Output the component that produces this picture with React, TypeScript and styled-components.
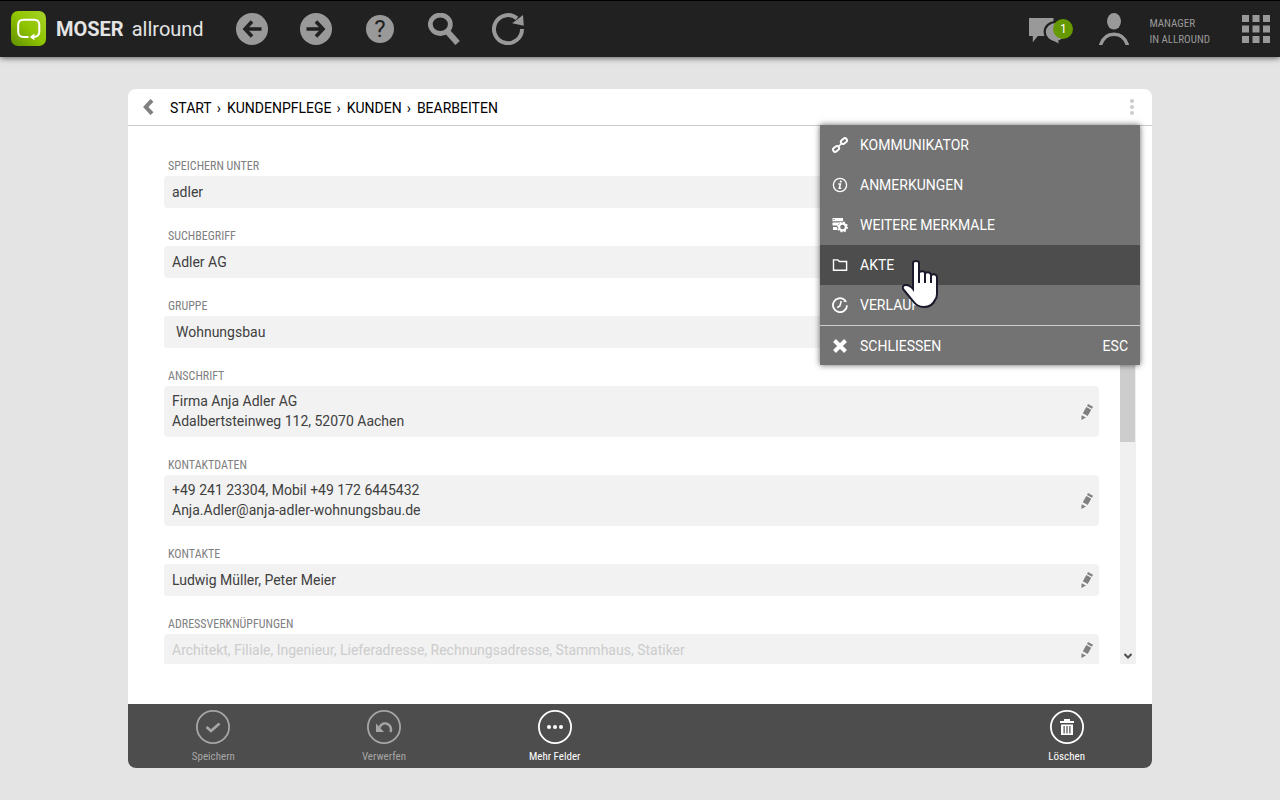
import React from "react";
import styled, { createGlobalStyle } from "styled-components";

const sans = `Roboto, "Liberation Sans", sans-serif`;
const condensed = `"Roboto Condensed", Roboto, "Liberation Sans Narrow", sans-serif`;

const GlobalStyle = createGlobalStyle`
  *, *::before, *::after { box-sizing: border-box; }
  body { margin: 0; background: #e4e4e4; font-family: ${sans}; font-size: 14px; }
  button, input, select, textarea { font: inherit; margin: 0; }
  button { border: 0; padding: 0; background: none; cursor: pointer; }
`;

const Page = styled.div`
  display: flex;
  flex-direction: column;
  height: 100vh;
`;

const TopBar = styled.header`
  display: flex;
  align-items: center;
  flex: none;
  height: 57px;
  padding: 0 10px 0 11px;
  border-top: 1px solid #000;
  background: #212121;
  box-shadow: 0 1px 6px rgba(0, 0, 0, 0.6);
  color: #999;
`;

const Brand = styled.a`
  display: flex;
  align-items: center;
  gap: 9px;
  width: 209px;
  color: #e4e4e4;
  font-size: 20px;
  line-height: 24px;
  text-decoration: none;
`;

const BrandName = styled.strong`
  margin-right: 8px;
  font-weight: 700;
`;

const Nav = styled.nav`
  display: flex;
  flex: 1;
`;

const NavButton = styled.button`
  display: flex;
  align-items: center;
  justify-content: center;
  width: 64px;
  height: 56px;
  color: inherit;
`;

const HelpDisc = styled.span`
  display: block;
  width: 28px;
  height: 28px;
  border-radius: 50%;
  background: #999;
  color: #212121;
  font-size: 24px;
  font-weight: 400;
  line-height: 28px;
  text-align: center;
`;

const Account = styled.div`
  display: flex;
  align-items: center;
`;

const ChatButton = styled.button`
  position: relative;
  display: flex;
  width: 44px;
  height: 28px;
  margin-right: 26px;
  color: inherit;
`;

const Badge = styled.span`
  position: absolute;
  top: 4px;
  right: 0;
  width: 20px;
  height: 20px;
  border-radius: 50%;
  background: #690;
  color: #fff;
  font-size: 12px;
  line-height: 20px;
  text-align: center;
`;

const UserButton = styled.button`
  display: flex;
  align-items: center;
  gap: 20px;
  margin-right: 32px;
  color: inherit;
  font-family: ${condensed};
  font-size: 11px;
  line-height: 16px;
  text-align: left;
`;

const UserText = styled.span`
  padding-top: 6px;
`;

const GridButton = styled.button`
  display: flex;
  color: inherit;
`;

const Card = styled.main`
  position: relative;
  display: flex;
  flex-direction: column;
  flex: 1;
  min-height: 0;
  margin: 32px 10%;
  border-radius: 8px;
  background: #fff;
`;

const CardHeader = styled.div`
  display: flex;
  align-items: center;
  flex: none;
  height: 37px;
  padding: 0 12px 0 15px;
  border-bottom: 1px solid #ccc;
`;

const BackButton = styled.button`
  display: flex;
  width: 27px;
`;

const Crumbs = styled.nav`
  display: flex;
  flex: 1;
  gap: 5px;
  line-height: 20px;
  padding-top: 2px;
`;

const Separator = styled.span`
  padding-right: 1px;
`;

const Crumb = styled.a`
  color: #000;
  text-decoration: none;
`;

const MoreButton = styled.button`
  display: flex;
  width: 16px;
  justify-content: center;
`;

const Body = styled.div`
  display: flex;
  flex: 1;
  min-height: 0;
  margin: 30px 16px 40px 36px;
`;

const Form = styled.form`
  display: flex;
  flex-direction: column;
  flex: 1;
  gap: 18px;
  overflow-y: auto;
  scrollbar-width: none;
`;

const Field = styled.div`
  flex: none;
`;

const Label = styled.label`
  display: block;
  padding: 0 4px;
  color: #808080;
  font-family: ${condensed};
  font-size: 12px;
  line-height: 20px;
`;

const Box = styled.div`
  display: flex;
  align-items: center;
  border-radius: 4px;
  background: #f2f2f2;
`;

const Input = styled.input`
  flex: 1;
  height: 32px;
  padding: 0 8px;
  border: 0;
  outline: 0;
  background: none;
  color: #404040;
  &::placeholder { color: #ccc; }
`;

const Select = styled.select`
  flex: 1;
  height: 32px;
  padding: 0 12px;
  border: 0;
  appearance: none;
  background: none;
  color: #404040;
`;

const TextArea = styled.textarea`
  display: block;
  flex: 1;
  height: 51px;
  padding: 5px 8px;
  border: 0;
  outline: 0;
  resize: none;
  overflow: hidden;
  background: none;
  color: #404040;
  line-height: 20px;
`;

const EditButton = styled.button`
  display: flex;
  padding: 0 6px;
`;

const ScrollTrack = styled.div`
  flex: none;
  width: 16px;
  margin-left: 21px;
  display: flex;
  flex-direction: column;
  justify-content: space-between;
  align-items: center;
  background: #f0f0f0;
`;

const ScrollThumb = styled.div`
  align-self: flex-start;
  flex: 0 1 286px;
  width: 15px;
  background: #cdcdcd;
`;

const ScrollDown = styled.button`
  display: flex;
  height: 16px;
  align-items: center;
`;

const ActionBar = styled.footer`
  display: grid;
  grid-template-columns: repeat(6, 1fr);
  flex: none;
  height: 64px;
  border-radius: 0 0 8px 8px;
  background: #4d4d4d;
`;

const Action = styled.button<{ $last?: boolean }>`
  display: flex;
  flex-direction: column;
  align-items: center;
  gap: 5px;
  padding-top: 6px;
  grid-column: ${(p) => (p.$last ? "6" : "auto")};
  color: #fff;
  font-family: ${condensed};
  font-size: 11px;
  line-height: 16px;
  &:disabled { color: #a6a6a6; cursor: default; }
`;

const Menu = styled.div`
  position: absolute;
  top: 36px;
  right: 12px;
  width: 320px;
  background: #737373;
  box-shadow: 0 0 6px rgba(0, 0, 0, 0.6);
`;

const MenuItem = styled.button<{ $active?: boolean; $divided?: boolean }>`
  display: flex;
  align-items: center;
  gap: 12px;
  width: 100%;
  height: 40px;
  padding: 0 12px;
  border-top: ${(p) => (p.$divided ? "1px solid #ccc" : "0")};
  background: ${(p) => (p.$active ? "#4d4d4d" : "transparent")};
  color: #fff;
  text-align: left;
`;

const MenuText = styled.span`
  flex: 1;
`;

const Pointer = styled.svg`
  position: absolute;
  top: 135px;
  left: 82px;
  pointer-events: none;
`;

const Logo = () => (
  <svg width="36" height="36" viewBox="0 0 36 36" aria-hidden="true">
    <defs>
      <linearGradient id="logo" x1="0" y1="1" x2="1" y2="0">
        <stop offset="0" stopColor="#5f8f00" />
        <stop offset="0.5" stopColor="#8fc400" />
        <stop offset="1" stopColor="#a6d42a" />
      </linearGradient>
    </defs>
    <rect width="35" height="35" rx="7" fill="url(#logo)" />
    <path d="M17.5 26H12.5Q7.2 26 7.2 20.5V14Q7.2 8.7 12.5 8.7H23Q28.3 8.7 28.3 14V20.5Q28.3 25.6 23 25.9" fill="none" stroke="#fff" strokeWidth="2" />
    <path d="M18.8 26L23.4 22.6V29.2Z" fill="#fff" />
  </svg>
);

const ArrowDisc = ({ flip = false }: { flip?: boolean }) => (
  <svg width="32" height="32" viewBox="0 0 32 32" aria-hidden="true">
    <circle cx="16" cy="16" r="16" fill="#999" />
    <path
      d={flip ? "M6.5 16H22M16 8.6L23 16L16 23.4" : "M25.5 16H10M16 8.6L9 16L16 23.4"}
      fill="none"
      stroke="#212121"
      strokeWidth="3.6"
    />
  </svg>
);

const SearchIcon = () => (
  <svg width="32" height="32" viewBox="0 0 32 32" aria-hidden="true">
    <ellipse cx="12.3" cy="11.3" rx="10" ry="9.2" fill="none" stroke="#999" strokeWidth="4.8" />
    <path d="M18 17L29.6 30" stroke="#999" strokeWidth="6" />
  </svg>
);

const ReloadIcon = () => (
  <svg width="32" height="32" viewBox="0 0 32 32" aria-hidden="true">
    <path d="M30 16A14 14 0 1 1 25 5.4" fill="none" stroke="#999" strokeWidth="4" />
    <path d="M31 2L31.8 12.8L20.2 10.3Z" fill="#999" />
  </svg>
);

const ChatIcon = () => (
  <svg width="36" height="30" viewBox="0 0 36 30" aria-hidden="true">
    <path d="M0 3H24.5V21H8.8L3.8 27.2V21H0Z" fill="#999" />
    <ellipse cx="26.5" cy="17" rx="10.8" ry="10" fill="#999" stroke="#212121" strokeWidth="2.2" />
    <path d="M23 25L29.8 28.400L28.500 23Z" fill="#999" />
  </svg>
);

const UserIcon = () => (
  <svg width="30" height="32" viewBox="0 0 30 32" aria-hidden="true">
    <ellipse cx="15" cy="8.300" rx="7" ry="8.300" fill="#999" />
    <path d="M1.400 32.500C3.500 25.500 8 21.200 15 21.200S26.500 25.500 28.600 32.500" fill="none" stroke="#999" strokeWidth="3.400" />
  </svg>
);

const AppsIcon = () => (
  <svg width="28" height="28" viewBox="0 0 28 28" fill="#999" aria-hidden="true">
    {[0, 10.5, 21].map((y) => [0, 10.5, 21].map((x) => <rect key={`${x}-${y}`} x={x} y={y} width="7" height="7" />))}
  </svg>
);

const PencilIcon = () => (
  <svg width="12" height="16" viewBox="0 0 12 16" fill="#808080" aria-hidden="true">
    <path d="M7 0L12 2.800L11 4.700L6 1.900Z" />
    <path d="M5.300 3L10.200 5.800L6.700 12L1.800 9.200Z" />
    <path d="M0.600 11.200L5 13.400L0.300 16Z" />
  </svg>
);

const icon = { width: 16, height: 16, viewBox: "0 0 16 16", fill: "none", stroke: "#fff", "aria-hidden": true } as const;

const LinkIcon = () => (
  <svg {...icon} strokeWidth="1.900">
    <rect x="-3.300" y="-2.100" width="6.600" height="4.200" rx="2.100" transform="translate(11.900 4.100) rotate(-40)" />
    <rect x="-3.300" y="-2.100" width="6.600" height="4.200" rx="2.100" transform="translate(4.100 11.900) rotate(-40)" />
    <path d="M6.200 9.800L9.800 6.200" strokeWidth="1.500" />
  </svg>
);

const InfoIcon = () => (
  <svg {...icon}>
    <circle cx="8" cy="8" r="6.600" strokeWidth="1.300" />
    <path d="M6.300 7H8.400L7.300 11.300H9.200" strokeWidth="1.500" />
    <circle cx="8.800" cy="4.500" r="1.100" fill="#fff" stroke="none" />
  </svg>
);

const AttributesIcon = () => (
  <svg {...icon} stroke="none" fill="#fff">
    <path d="M0.500 1H11V4.200H0.500ZM1.500 2V3H2.700V2Z" fillRule="evenodd" />
    <path d="M0.500 5.400H8L5.600 8.600H0.500ZM1 10H5L5.300 13H1Z" />
    <circle cx="10.500" cy="10" r="3.400" fill="none" stroke="#fff" strokeWidth="2.200" />
    <circle cx="10.500" cy="10" r="4.800" fill="none" stroke="#fff" strokeWidth="1.400" strokeDasharray="1.900 1.870" />
  </svg>
);

const FolderIcon = () => (
  <svg {...icon} strokeWidth="1.400">
    <path d="M1.500 13.300V2.900H5.800L7.500 4.500H14.600V13.300Z" />
  </svg>
);

const HistoryIcon = () => (
  <svg {...icon}>
    <path d="M12.600 2.900A7 7 0 1 0 15 8.400" strokeWidth="1.800" />
    <path d="M11.200 4.400L13.200 2L15 5.200Z" fill="#fff" stroke="none" />
    <path d="M9.200 4L7.900 8.900L5.200 10.600" strokeWidth="1.500" />
  </svg>
);

const CloseIcon = () => (
  <svg {...icon} strokeWidth="4">
    <path d="M2.500 2.500L13.500 13.500M13.500 2.500L2.500 13.500" />
  </svg>
);

const Ring = ({ children }: { children: React.ReactNode }) => (
  <svg width="34" height="34" viewBox="0 0 34 34" fill="none" stroke="currentColor" aria-hidden="true">
    <circle cx="17" cy="17" r="16.100" strokeWidth="1.800" />
    {children}
  </svg>
);

const crumbs = ["START", "KUNDENPFLEGE", "KUNDEN", "BEARBEITEN"];

const Edit = ({ label }: { label: string }) => (
  <EditButton type="button" aria-label={`${label} bearbeiten`}>
    <PencilIcon />
  </EditButton>
);

export default function App() {
  return (
    <>
      <GlobalStyle />
      <Page>
        <TopBar>
          <Brand href="#">
            <Logo />
            <span><BrandName>MOSER</BrandName>allround</span>
          </Brand>
          <Nav aria-label="Navigation">
            <NavButton aria-label="Zurück"><ArrowDisc /></NavButton>
            <NavButton aria-label="Vorwärts"><ArrowDisc flip /></NavButton>
            <NavButton aria-label="Hilfe"><HelpDisc>?</HelpDisc></NavButton>
            <NavButton aria-label="Suche"><SearchIcon /></NavButton>
            <NavButton aria-label="Neu laden"><ReloadIcon /></NavButton>
          </Nav>
          <Account>
            <ChatButton aria-label="Nachrichten">
              <ChatIcon />
              <Badge>1</Badge>
            </ChatButton>
            <UserButton>
              <UserIcon />
              <UserText>MANAGER<br />IN ALLROUND</UserText>
            </UserButton>
            <GridButton aria-label="Apps"><AppsIcon /></GridButton>
          </Account>
        </TopBar>

        <Card>
          <CardHeader>
            <BackButton aria-label="Zurück">
              <svg width="11" height="16" viewBox="0 0 11 16" fill="none" stroke="#808080" strokeWidth="4" aria-hidden="true">
                <path d="M9 1.300L2.800 8L9 14.700" />
              </svg>
            </BackButton>
            <Crumbs aria-label="Pfad">
              {crumbs.map((c, i) => (
                <React.Fragment key={c}>
                  {i > 0 && <Separator>›</Separator>}
                  <Crumb href="#">{c}</Crumb>
                </React.Fragment>
              ))}
            </Crumbs>
            <MoreButton aria-label="Menü">
              <svg width="4" height="16" viewBox="0 0 4 16" fill="#ccc" aria-hidden="true">
                <circle cx="2" cy="2" r="2" />
                <circle cx="2" cy="8" r="2" />
                <circle cx="2" cy="14" r="2" />
              </svg>
            </MoreButton>
          </CardHeader>

          <Body>
            <Form>
              <Field>
                <Label htmlFor="save">SPEICHERN UNTER</Label>
                <Box><Input id="save" defaultValue="adler" /></Box>
              </Field>
              <Field>
                <Label htmlFor="term">SUCHBEGRIFF</Label>
                <Box><Input id="term" defaultValue="Adler AG" /></Box>
              </Field>
              <Field>
                <Label htmlFor="group">GRUPPE</Label>
                <Box>
                  <Select id="group"><option>Wohnungsbau</option></Select>
                </Box>
              </Field>
              <Field>
                <Label htmlFor="address">ANSCHRIFT</Label>
                <Box>
                  <TextArea id="address" readOnly value={"Firma Anja Adler AG\nAdalbertsteinweg 112, 52070 Aachen"} />
                  <Edit label="Anschrift" />
                </Box>
              </Field>
              <Field>
                <Label htmlFor="contact">KONTAKTDATEN</Label>
                <Box>
                  <TextArea id="contact" readOnly value={"+49 241 23304, Mobil +49 172 6445432\nAnja.Adler@anja-adler-wohnungsbau.de"} />
                  <Edit label="Kontaktdaten" />
                </Box>
              </Field>
              <Field>
                <Label htmlFor="people">KONTAKTE</Label>
                <Box>
                  <Input id="people" readOnly value="Ludwig Müller, Peter Meier" />
                  <Edit label="Kontakte" />
                </Box>
              </Field>
              <Field>
                <Label htmlFor="links">ADRESSVERKNÜPFUNGEN</Label>
                <Box>
                  <Input id="links" readOnly placeholder="Architekt, Filiale, Ingenieur, Lieferadresse, Rechnungsadresse, Stammhaus, Statiker" />
                  <Edit label="Adressverknüpfungen" />
                </Box>
              </Field>
            </Form>
            <ScrollTrack>
              <ScrollThumb />
              <ScrollDown aria-label="Nach unten">
                <svg width="8" height="6" viewBox="0 0 8 6" fill="none" stroke="#505050" strokeWidth="2" aria-hidden="true">
                  <path d="M0.500 1L4 4.500L7.500 1" />
                </svg>
              </ScrollDown>
            </ScrollTrack>
          </Body>

          <ActionBar>
            <Action disabled>
              <Ring><path d="M10.500 17L15 21L23.500 13.500" strokeWidth="2.800" /></Ring>
              Speichern
            </Action>
            <Action disabled>
              <Ring>
                <path d="M12.500 17.500C14 13.500 18 12.400 21 14.200C24 16 24.500 19 23.500 22" strokeWidth="2.400" />
                <path d="M9 13.500V22H17Z" fill="currentColor" stroke="none" />
              </Ring>
              Verwerfen
            </Action>
            <Action>
              <Ring>
                <g fill="currentColor" stroke="none">
                  <circle cx="11" cy="17" r="2" />
                  <circle cx="17" cy="17" r="2" />
                  <circle cx="23" cy="17" r="2" />
                </g>
              </Ring>
              Mehr Felder
            </Action>
            <Action $last>
              <Ring>
                <g fill="currentColor" stroke="none">
                  <path d="M10 11H14V9H20V11H24V13H10Z" />
                  <path d="M11 14.500H23V25H11ZM13.500 16V23.500H14.700V16ZM16.400 16V23.500H17.600V16ZM19.300 16V23.500H20.500V16Z" fillRule="evenodd" />
                </g>
              </Ring>
              Löschen
            </Action>
          </ActionBar>

          <Menu role="menu">
            <MenuItem role="menuitem"><LinkIcon /><MenuText>KOMMUNIKATOR</MenuText></MenuItem>
            <MenuItem role="menuitem"><InfoIcon /><MenuText>ANMERKUNGEN</MenuText></MenuItem>
            <MenuItem role="menuitem"><AttributesIcon /><MenuText>WEITERE MERKMALE</MenuText></MenuItem>
            <MenuItem role="menuitem" $active><FolderIcon /><MenuText>AKTE</MenuText></MenuItem>
            <MenuItem role="menuitem"><HistoryIcon /><MenuText>VERLAUF</MenuText></MenuItem>
            <MenuItem role="menuitem" $divided><CloseIcon /><MenuText>SCHLIESSEN</MenuText><span>ESC</span></MenuItem>
            <Pointer width="36" height="48" viewBox="0 0 36 48" aria-hidden="true">
              <path
                d="M11 3Q11 1 14 1Q17 1 17 3V12Q22 10 23 13Q28 11 29 15Q34 13 35 17V34Q35 38 33 40Q30 47 22 47Q15 47 11 41L1 29Q0 25 4 25Q8 25 11 29Z"
                fill="#fff"
                stroke="#1a1a2c"
                strokeWidth="2"
              />
              <path d="M17 11V23M23 12V23M29 14V23" stroke="#1a1a2c" strokeWidth="2" />
            </Pointer>
          </Menu>
        </Card>
      </Page>
    </>
  );
}
